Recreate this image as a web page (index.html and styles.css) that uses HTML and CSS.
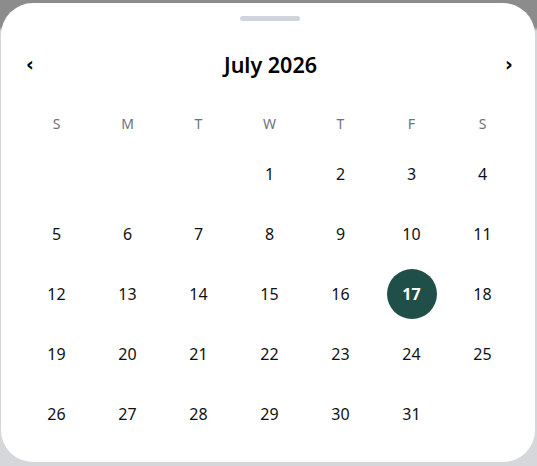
FILE: index.html
```html
<!DOCTYPE html>
<html>
<head>
<meta charset="utf-8">
<link rel="stylesheet" href="styles.css">
</head>
<body>
<div class="sheet">
  <div class="handle"></div>
  <div class="header">
    <button class="nav">‹</button>
    <div class="title">July 2026</div>
    <button class="nav">›</button>
  </div>
  <div class="weekdays">
    <span>S</span><span>M</span><span>T</span><span>W</span><span>T</span><span>F</span><span>S</span>
  </div>
  <div class="days">
    <span></span><span></span><span></span>
    <span class="day">1</span><span class="day">2</span><span class="day">3</span><span class="day">4</span>
    <span class="day">5</span><span class="day">6</span><span class="day">7</span><span class="day">8</span><span class="day">9</span><span class="day">10</span><span class="day">11</span>
    <span class="day">12</span><span class="day">13</span><span class="day">14</span><span class="day">15</span><span class="day">16</span><span class="day selected">17</span><span class="day">18</span>
    <span class="day">19</span><span class="day">20</span><span class="day">21</span><span class="day">22</span><span class="day">23</span><span class="day">24</span><span class="day">25</span>
    <span class="day">26</span><span class="day">27</span><span class="day">28</span><span class="day">29</span><span class="day">30</span><span class="day">31</span><span></span>
  </div>
</div>
</body>
</html>
```
FILE: styles.css
```css
html, body {
  margin: 0;
  padding: 0;
}
body {
  width: 537px;
  height: 466px;
  background: linear-gradient(#8c8c8c 0, #8c8c8c 27px, #d6d7da 31px, #d6d7da 100%);
  font-family: "Noto Sans", "Open Sans", sans-serif;
  overflow: hidden;
}
.sheet {
  box-sizing: border-box;
  margin: 3px 0 0 1px;
  width: 534px;
  height: 459px;
  background: #fff;
  border-radius: 32px;
  padding: 13px 17px 0 20px;
  display: flex;
  flex-direction: column;
}
.handle {
  align-self: center;
  width: 60px;
  height: 5px;
  border-radius: 3px;
  background: #d1d5db;
}
.header {
  margin-top: 21px;
  height: 44px;
  display: flex;
  align-items: center;
  justify-content: space-between;
}
.nav {
  border: none;
  background: none;
  padding: 0;
  width: 18px;
  height: 30px;
  font-family: "DejaVu Sans", sans-serif;
  font-size: 19px;
  font-weight: bold;
  color: #000;
  line-height: 30px;
}
.title {
  font-size: 21.5px;
  font-weight: 600;
  color: #000;
  margin-left: 2px;
}
.weekdays {
  margin-top: 17px;
  height: 41px;
  display: grid;
  grid-template-columns: repeat(7, 71px);
  align-items: center;
  justify-items: center;
  font-size: 14px;
  color: #6b7280;
}
.days {
  display: grid;
  grid-template-columns: repeat(7, 71px);
  grid-auto-rows: 60px;
  align-items: center;
  justify-items: center;
  font-size: 16px;
  color: #111;
}
.day {
  width: 50px;
  height: 50px;
  border-radius: 50%;
  display: flex;
  align-items: center;
  justify-content: center;
}
.selected {
  background: #1f4f48;
  color: #fff;
  font-weight: 700;
}
```
